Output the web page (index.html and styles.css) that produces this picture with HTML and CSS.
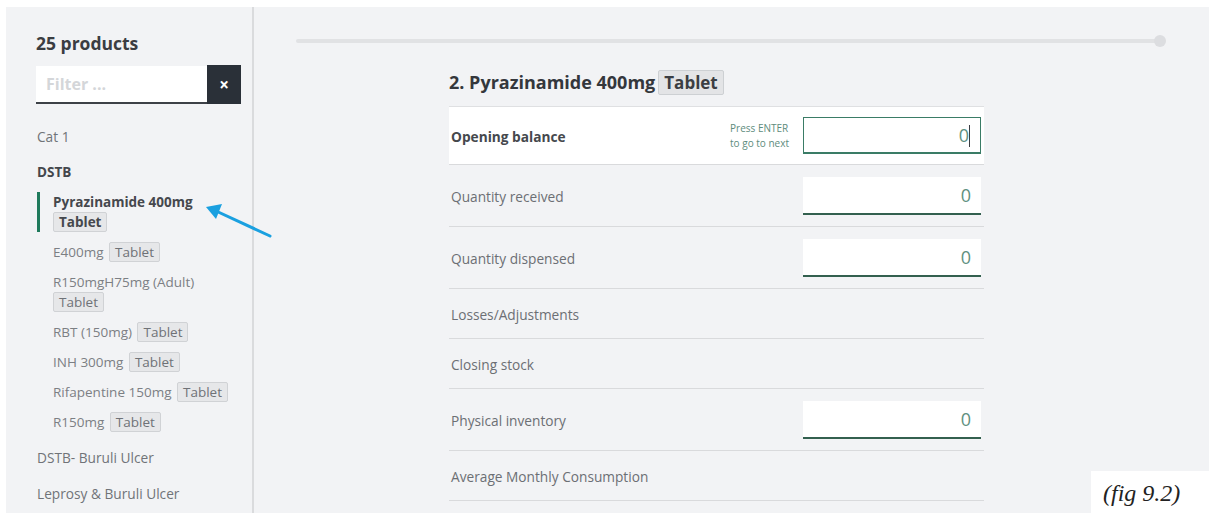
FILE: index.html
```html
<!DOCTYPE html>
<html lang="en">
<head>
<meta charset="utf-8">
<title>Stock count</title>
<link rel="stylesheet" href="styles.css">
</head>
<body>
<div class="app">
  <aside class="sidebar">
    <h2 class="count">25 products</h2>
    <div class="filter">
      <div class="filter-input">Filter ...</div>
      <button class="filter-clear" type="button">&times;</button>
    </div>
    <div class="cat">Cat 1</div>
    <div class="cat cat-open">DSTB</div>
    <ul class="products">
      <li class="product active">Pyrazinamide 400mg<br><span class="badge">Tablet</span></li>
      <li class="product">E400mg <span class="badge">Tablet</span></li>
      <li class="product">R150mgH75mg (Adult)<br><span class="badge">Tablet</span></li>
      <li class="product">RBT (150mg) <span class="badge">Tablet</span></li>
      <li class="product">INH 300mg <span class="badge">Tablet</span></li>
      <li class="product">Rifapentine 150mg <span class="badge">Tablet</span></li>
      <li class="product">R150mg <span class="badge">Tablet</span></li>
    </ul>
    <div class="cat">DSTB- Buruli Ulcer</div>
    <div class="cat">Leprosy &amp; Buruli Ulcer</div>
  </aside>

  <main class="main">
    <div class="progress"><span class="knob"></span></div>
    <section class="entry">
      <h1 class="title">2. Pyrazinamide 400mg <span class="badge badge-lg">Tablet</span></h1>
      <div class="rows">
        <div class="row row-active">
          <span class="label">Opening balance</span>
          <span class="hint">Press ENTER<br>to go to next</span>
          <div class="field field-focus">0<span class="caret"></span></div>
        </div>
        <div class="row">
          <span class="label">Quantity received</span>
          <div class="field">0</div>
        </div>
        <div class="row">
          <span class="label">Quantity dispensed</span>
          <div class="field">0</div>
        </div>
        <div class="row row-plain">
          <span class="label">Losses/Adjustments</span>
        </div>
        <div class="row row-plain">
          <span class="label">Closing stock</span>
        </div>
        <div class="row">
          <span class="label">Physical inventory</span>
          <div class="field">0</div>
        </div>
        <div class="row row-plain">
          <span class="label">Average Monthly Consumption</span>
        </div>
      </div>
    </section>
  </main>
</div>

<svg class="pointer" width="90" height="50" viewBox="0 0 90 50">
  <line x1="68" y1="38" x2="14" y2="13" stroke="#1aa0e0" stroke-width="3" stroke-linecap="round"/>
  <polygon points="4,9 20,6 14,21" fill="#1aa0e0"/>
</svg>

<div class="caption">(fig 9.2)</div>
</body>
</html>
```

FILE: styles.css
```css
* { box-sizing: border-box; }

html, body {
  margin: 0;
  padding: 0;
  background: #ffffff;
}

body {
  font-family: "Open Sans", Lato, sans-serif;
  width: 1209px;
  height: 513px;
  overflow: hidden;
  position: relative;
}

.app {
  display: flex;
  margin: 7px 0 0 6px;
  height: 506px;
  background: #f2f3f5;
}

/* ---- sidebar ---- */
.sidebar {
  width: 248px;
  flex: none;
  border-right: 2px solid #dadbdd;
  padding: 24px 0 0 30px;
}

.count {
  margin: 0;
  font-size: 17.5px;
  line-height: 24px;
  font-weight: 700;
  color: #3a3d42;
}

.filter {
  display: flex;
  width: 205px;
  height: 39px;
  margin-top: 10px;
}

.filter-input {
  flex: 1;
  background: #fff;
  border-bottom: 2px solid #3d4147;
  margin: 1px 0 0;
  padding: 0 10px;
  font-size: 16px;
  font-weight: 700;
  line-height: 36px;
  color: #d4d6d9;
}

.filter-clear {
  width: 34px;
  border: 0;
  padding: 0;
  background: #2a3038;
  color: #fff;
  font-family: "Open Sans", sans-serif;
  font-size: 17px;
  font-weight: 700;
  line-height: 39px;
}

.cat {
  padding: 7px 0 8px 1px;
  font-size: 13.7px;
  line-height: 21px;
  color: #707378;
}

.filter + .cat { margin-top: 15px; }

.cat-open {
  font-weight: 700;
  font-size: 13.5px;
  color: #44474c;
}

.products {
  list-style: none;
  margin: 0;
  padding: 1px 0 8px 1px;
  display: flex;
  flex-direction: column;
  gap: 10px;
}

.product {
  border-left: 3px solid transparent;
  padding-left: 13px;
  font-size: 13.5px;
  line-height: 20px;
  color: #7c7f84;
}

.product.active {
  border-left-color: #1f7a5c;
  font-weight: 700;
  color: #45484d;
}

.badge {
  display: inline-block;
  padding: 0 5px;
  margin-left: 2px;
  background: #e6e7e9;
  border: 1px solid #d0d2d5;
  border-radius: 2px;
  line-height: 18px;
  color: #6f7277;
}

.product.active .badge { color: #45484d; margin-left: 0; }
.product br + .badge { margin-left: 0; }

/* ---- main ---- */
.main {
  flex: 1;
  padding: 32px 43px 0 42px;
}

.progress {
  position: relative;
  height: 4px;
  margin-right: 6px;
  background: #e1e2e4;
  border-radius: 2px;
}

.knob {
  position: absolute;
  right: -6px;
  top: -4px;
  width: 12px;
  height: 12px;
  border-radius: 50%;
  background: #dcdde0;
}

.entry {
  width: 535px;
  margin: 27px 0 0 153px;
}

.title {
  margin: 0 0 11px;
  display: flex;
  align-items: center;
  gap: 3px;
  font-size: 18px;
  line-height: 25px;
  font-weight: 700;
  color: #34373c;
}

.badge-lg {
  padding: 0 5px;
  margin-left: 0;
  font-size: 17px;
  line-height: 23px;
  color: #3b3e43;
  background: #e3e4e6;
  border-color: #cdd0d3;
}

.rows { border-top: 1px solid #dfe0e2; }

.row {
  display: flex;
  align-items: center;
  padding: 11.5px 3px 11.5px 2px;
  border-bottom: 1px solid #d9dadc;
}

.row-plain {
  height: 50px;
  padding-top: 0;
  padding-bottom: 0;
}

.row-active {
  background: #fff;
  padding-top: 10px;
  padding-bottom: 10px;
}

.label {
  flex: 1;
  font-size: 13.7px;
  color: #6c6f74;
  padding-top: 2px;
}

.row-active .label {
  font-weight: 700;
  color: #45484d;
}

.hint {
  margin-right: 14px;
  font-size: 10px;
  line-height: 15px;
  color: #5e8c7d;
}

.field {
  width: 178px;
  height: 38px;
  background: #fff;
  border-bottom: 2px solid #33604f;
  padding: 0 10px;
  text-align: right;
  font-size: 18px;
  font-weight: 400;
  line-height: 36px;
  color: #5f917f;
}

.field-focus {
  height: 37px;
  border: 1px solid #3a7c66;
  border-bottom-width: 2px;
  line-height: 34px;
}

.caret {
  display: inline-block;
  width: 1px;
  height: 22px;
  vertical-align: -5px;
  background: #3a3d42;
}

/* ---- annotation ---- */
.pointer {
  position: absolute;
  left: 202px;
  top: 198px;
}

.caption {
  position: absolute;
  right: 0;
  bottom: 0;
  width: 118px;
  height: 42px;
  padding: 0 0 0 12px;
  background: #ffffff;
  font-family: "Liberation Serif", serif;
  font-style: italic;
  font-size: 24px;
  line-height: 44px;
  color: #222;
}
```
